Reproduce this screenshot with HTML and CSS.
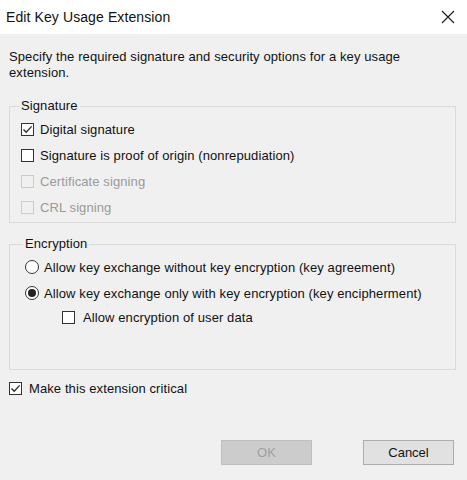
FILE: index.html
```html
<!DOCTYPE html>
<html lang="en">
<head>
<meta charset="utf-8">
<title>Edit Key Usage Extension</title>
<link rel="stylesheet" href="styles.css">
</head>
<body>
<div class="dialog">
  <div class="titlebar">
    <span class="title">Edit Key Usage Extension</span>
    <svg class="close" width="14" height="14" viewBox="0 0 14 14" aria-hidden="true">
      <path d="M1 1 L13 13 M13 1 L1 13" stroke="#1a1a1a" stroke-width="1.1" fill="none"/>
    </svg>
  </div>
  <div class="content">
    <p class="desc">Specify the required signature and security options for a key usage extension.</p>

    <fieldset class="group group-sig">
      <legend>Signature</legend>
      <div class="row">
        <span class="box checked"><svg viewBox="0 0 13 13" width="13" height="13"><path d="M2.5 6.5 L5.2 9.3 L10.6 3.4" stroke="#2b2b2b" stroke-width="1.3" fill="none"/></svg></span>
        <span class="label">Digital signature</span>
      </div>
      <div class="row">
        <span class="box"></span>
        <span class="label">Signature is proof of origin (nonrepudiation)</span>
      </div>
      <div class="row disabled">
        <span class="box"></span>
        <span class="label">Certificate signing</span>
      </div>
      <div class="row disabled">
        <span class="box"></span>
        <span class="label">CRL signing</span>
      </div>
    </fieldset>

    <fieldset class="group group-enc">
      <legend>Encryption</legend>
      <div class="row">
        <span class="radio"></span>
        <span class="label">Allow key exchange without key encryption (key agreement)</span>
      </div>
      <div class="row">
        <span class="radio selected"></span>
        <span class="label">Allow key exchange only with key encryption (key encipherment)</span>
      </div>
      <div class="row sub">
        <span class="box"></span>
        <span class="label">Allow encryption of user data</span>
      </div>
    </fieldset>

    <div class="row critical">
      <span class="box checked"><svg viewBox="0 0 13 13" width="13" height="13"><path d="M2.5 6.5 L5.2 9.3 L10.6 3.4" stroke="#2b2b2b" stroke-width="1.3" fill="none"/></svg></span>
      <span class="label">Make this extension critical</span>
    </div>

    <div class="footer">
      <button class="btn btn-disabled" disabled>OK</button>
      <button class="btn">Cancel</button>
    </div>
  </div>
</div>
</body>
</html>
```

FILE: styles.css
```css
html, body {
  margin: 0;
  padding: 0;
}
body {
  width: 467px;
  height: 480px;
  background: #f0f0f0;
  font-family: "Liberation Sans", Arial, sans-serif;
  font-size: 13px;
  letter-spacing: 0.1px;
  color: #111;
  overflow: hidden;
}
.dialog {
  display: flex;
  flex-direction: column;
  height: 480px;
}
.titlebar {
  height: 34px;
  background: #ffffff;
  display: flex;
  align-items: center;
  justify-content: space-between;
  padding: 0 12px 0 6px;
  flex-shrink: 0;
}
.title {
  font-size: 14px;
  color: #111;
}
.close {
  display: block;
}
.content {
  flex: 1;
  display: flex;
  flex-direction: column;
  padding: 0 11px 0 9px;
}
.desc {
  margin: 15px 0 0 0;
  line-height: 16px;
  padding-right: 40px;
}
.group {
  margin: 17px 0 0 0;
  border: 1px solid #dadada;
  padding: 2px 0 0 11px;
  min-width: 0;
}
.group legend {
  padding: 0 2px;
  margin-left: -2px;
  line-height: 16px;
  font-size: 13px;
}
.group-sig {
  padding-bottom: 2px;
}
.group-enc {
  margin-top: 13px;
  padding-left: 15px;
  height: 134px;
  box-sizing: border-box;
}
.row {
  display: flex;
  align-items: center;
  height: 26px;
  gap: 6px;
}
.group-enc .row {
  gap: 5px;
}
.group-enc .row.sub {
  height: 22px;
  margin-left: 37px;
  gap: 8px;
}
.box {
  width: 13px;
  height: 13px;
  box-sizing: border-box;
  border: 1px solid #333;
  background: #fff;
  flex-shrink: 0;
  position: relative;
}
.box svg {
  position: absolute;
  left: -1px;
  top: -1px;
}
.disabled .box {
  border-color: #cccccc;
  background: #f0f0f0;
}
.disabled .label {
  color: #9a9a9a;
}
.radio {
  width: 14px;
  height: 14px;
  box-sizing: border-box;
  border: 1px solid #333;
  border-radius: 50%;
  background: #fff;
  flex-shrink: 0;
  display: flex;
  align-items: center;
  justify-content: center;
}
.radio.selected::after {
  content: "";
  width: 8px;
  height: 8px;
  border-radius: 50%;
  background: #222;
}
.critical {
  margin-top: 5px;
  gap: 7px;
}
.footer {
  display: flex;
  justify-content: flex-end;
  gap: 51px;
  margin-top: 39px;
  padding-right: 2px;
}
.btn {
  width: 91px;
  height: 25px;
  box-sizing: border-box;
  border: 1px solid #adadad;
  background: #e1e1e1;
  font-family: "Liberation Sans", Arial, sans-serif;
  font-size: 13px;
  color: #111;
  padding: 0;
}
.btn-disabled {
  background: #cccccc;
  border-color: #bfbfbf;
  color: #a0a0a0;
}
```
